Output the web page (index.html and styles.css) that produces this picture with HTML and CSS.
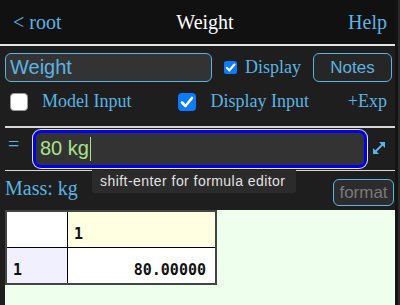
FILE: index.html
```html
<!DOCTYPE html>
<html>
<head>
<meta charset="utf-8">
<link rel="stylesheet" href="styles.css">
</head>
<body>
<div class="app">
  <div class="main">
    <div class="header">
      <span class="link back">&lt; root</span>
      <span class="title">Weight</span>
      <span class="link help">Help</span>
    </div>
    <div class="panel">
      <div class="row1">
        <input class="name" type="text" value="Weight">
        <span class="cb cb-small on"><svg viewBox="0 0 12 12"><path d="M2.6 6.3 L5 8.7 L9.6 3.2" fill="none" stroke="#fff" stroke-width="1.9" stroke-linecap="round" stroke-linejoin="round"/></svg></span>
        <span class="lbl lbl-display">Display</span>
        <button class="btn notes">Notes</button>
      </div>
      <div class="row2">
        <span class="cb cb-big off"></span>
        <span class="lbl lbl-model">Model Input</span>
        <span class="cb cb-big on cb-di"><svg viewBox="0 0 18 18"><path d="M4 9.5 L7.5 13 L14 5" fill="none" stroke="#fff" stroke-width="2.6" stroke-linecap="round" stroke-linejoin="round"/></svg></span>
        <span class="lbl lbl-di">Display Input</span>
        <span class="lbl exp">+Exp</span>
      </div>
      <div class="rule rule1"></div>
      <div class="formula">
        <span class="eq">=</span>
        <div class="finput"><span class="ftext">80 kg</span><span class="caret"></span></div>
        <svg class="expand" viewBox="0 0 16 16"><path d="M3.5 12.5 L12.5 3.5" stroke="#5ab4e4" stroke-width="2" fill="none"/><path d="M8 2 L14 2 L14 8 Z" fill="#5ab4e4"/><path d="M2 8 L2 14 L8 14 Z" fill="#5ab4e4"/></svg>
        <div class="tooltip">shift-enter for formula editor</div>
      </div>
      <div class="rule rule2"></div>
      <div class="massrow">
        <span class="mass">Mass: kg</span>
        <button class="btn format">format</button>
      </div>
      <div class="green">
        <table class="grid">
          <tr>
            <td class="corner"></td>
            <td class="colhead">1</td>
          </tr>
          <tr>
            <td class="rowhead">1</td>
            <td class="val">80.00000</td>
          </tr>
        </table>
      </div>
    </div>
  </div>
  <div class="edge"></div>
</div>
</body>
</html>
```
FILE: styles.css
```css
html, body {
  margin: 0;
  padding: 0;
}
body {
  width: 400px;
  height: 305px;
  overflow: hidden;
  background: #1e1e1e;
}
.app {
  display: flex;
  height: 305px;
}
.main {
  width: 395px;
  position: relative;
}
.edge {
  width: 5px;
  background: #141414;
  box-shadow: inset -2px 0 0 #2a2a2a;
}
.header {
  height: 44px;
  background: #111111;
  border-bottom: 2px solid #e4e4e4;
  display: grid;
  grid-template-columns: 1fr auto 1fr;
  align-items: center;
  padding: 0 8px 0 13px;
  font-family: "Liberation Serif", serif;
  font-size: 20px;
}
.link { color: #5ab4e4; }
.title { color: #ffffff; margin-left: 10px; }
.help { justify-self: end; }
.panel {
  padding-left: 5px;
  font-family: "Liberation Serif", serif;
  color: #5ab4e4;
}
.row1 {
  display: flex;
  align-items: center;
  height: 29px;
  margin-top: 7px;
}
.name {
  box-sizing: border-box;
  width: 207px;
  height: 29px;
  margin: 0;
  padding: 0 0 0 4px;
  border: 1.5px solid #5ab4e4;
  border-radius: 6px;
  background: #333333;
  color: #5ab4e4;
  font-family: "Liberation Sans", sans-serif;
  font-size: 20px;
  outline: none;
}
.cb {
  display: inline-flex;
  align-items: center;
  justify-content: center;
  box-sizing: border-box;
  flex: none;
}
.cb svg { width: 100%; height: 100%; display: block; }
.cb-small {
  width: 13px;
  height: 13px;
  border-radius: 2.5px;
  margin-left: 12px;
}
.on { background: #0b7bff; }
.off { background: #ffffff; border: 1px solid #9a9a9a; }
.cb-big {
  width: 18px;
  height: 18px;
  border-radius: 4px;
}
.lbl { font-size: 18px; white-space: nowrap; }
.lbl-display { margin-left: 8px; }
.btn {
  box-sizing: border-box;
  height: 29px;
  margin: 0;
  padding: 0;
  border: 1.5px solid #5ab4e4;
  border-radius: 6px;
  background: #262626;
  font-family: "Liberation Sans", sans-serif;
  font-size: 17px;
}
.notes {
  margin-left: auto;
  margin-right: 3px;
  width: 79px;
  color: #5ab4e4;
}
.row2 {
  display: flex;
  align-items: center;
  height: 27px;
  margin-top: 6px;
}
.row2 .off { margin-left: 5px; }
.lbl-model { margin-left: 14px; }
.cb-di { margin-left: 46px; }
.lbl-di { margin-left: 15px; }
.exp { margin-left: auto; margin-right: 8px; }
.rule {
  height: 1.5px;
  background: #d8d8d8;
}
.rule1 { margin-top: 11px; }
.formula {
  position: relative;
  display: flex;
  align-items: center;
  height: 42px;
}
.eq {
  width: 28px;
  padding-left: 3px;
  box-sizing: border-box;
  font-size: 20px;
  margin-top: -8px;
}
.finput {
  box-sizing: border-box;
  width: 334px;
  height: 38px;
  border: 3px solid #0000f2;
  border-radius: 8px;
  box-shadow: 0 0 0 1px #e8e8e8;
  background: #333333;
  display: flex;
  align-items: center;
  padding-left: 4px;
  font-family: "Liberation Sans", sans-serif;
  font-size: 20px;
  color: #a8e28c;
}
.caret {
  width: 1.5px;
  height: 24px;
  background: #a8e28c;
  margin-left: 1px;
}
.expand {
  width: 16px;
  height: 16px;
  margin-left: 4px;
  margin-top: -1px;
}
.tooltip {
  position: absolute;
  left: 87px;
  top: 42px;
  width: 204px;
  height: 23px;
  box-sizing: border-box;
  background: #2b2b2b;
  border-radius: 0 0 3px 3px;
  color: #e2e2e2;
  font-family: "Liberation Sans", sans-serif;
  font-size: 14px;
  letter-spacing: 0.45px;
  line-height: 23px;
  padding-left: 8px;
  white-space: nowrap;
  z-index: 2;
}
.massrow {
  display: flex;
  align-items: flex-start;
  height: 38.5px;
}
.mass {
  font-size: 20px;
  margin-top: 6px;
}
.format {
  margin-left: auto;
  margin-right: 1px;
  margin-top: 8px;
  width: 61px;
  height: 27px;
  color: #7a7a7a;
  background: #2c2c2c;
  font-size: 17px;
}
.green {
  width: 390px;
  height: 95px;
  background: #eeffee;
}
.grid {
  border-collapse: collapse;
  border: 2px solid #444444;
  font-family: "DejaVu Sans Mono", monospace;
  font-weight: bold;
  font-size: 15px;
  color: #111111;
}
.grid td {
  border: 1px solid #000000;
  vertical-align: bottom;
  padding: 0 0 4px 6px;
  height: 31px;
}
.corner { width: 54px; background: #ffffff; }
.colhead { width: 141px; background: #ffffe2; }
.rowhead { background: #f0f0ff; }
.val { background: #ffffff; text-align: right; padding-right: 9px !important; }
```
